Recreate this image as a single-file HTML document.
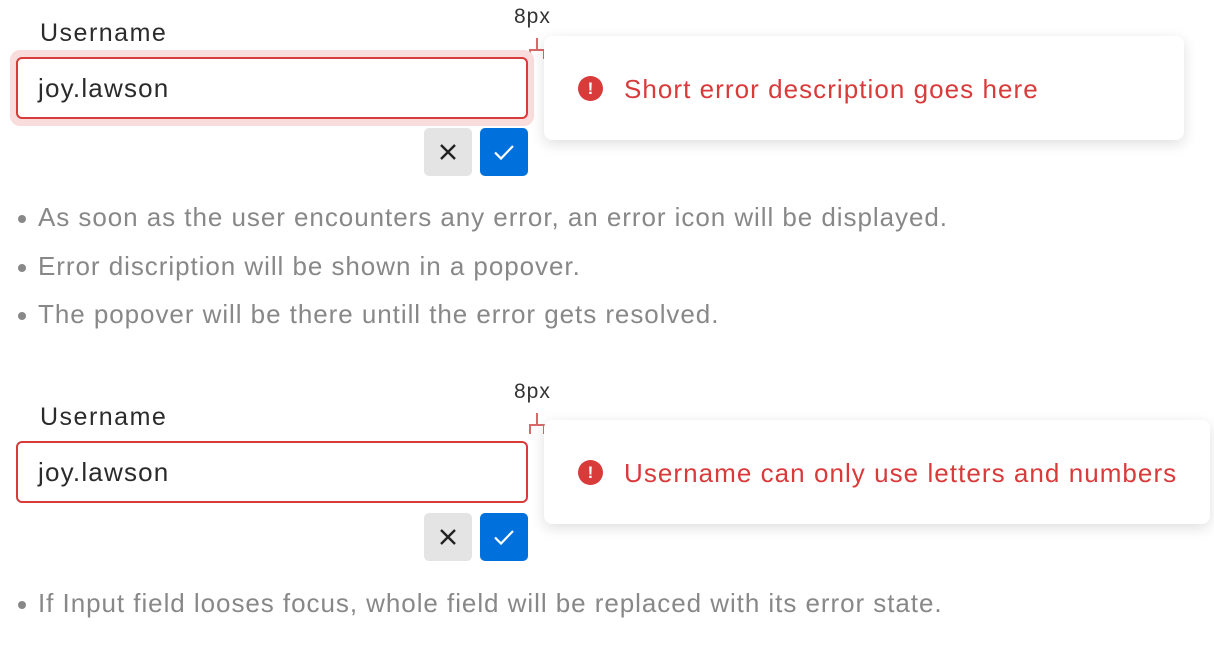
<!DOCTYPE html>
<html><head><meta charset="utf-8"><style>
*{margin:0;padding:0;box-sizing:border-box}
body{width:1214px;height:656px;background:#fff;font-family:"Liberation Sans",sans-serif;position:relative;overflow:hidden;color:#2b2b2b}
.abs{position:absolute;white-space:nowrap}
.label{font-size:25px;letter-spacing:1.5px;color:#2b2b2b}
.input{position:absolute;left:16px;width:512px;height:62px;border:2px solid #d93a3a;border-radius:6px;background:#fff;font-size:26px;letter-spacing:1.2px;padding-left:20px;line-height:58px;color:#2b2b2b}
.ring{position:absolute;left:10px;width:524px;height:76px;background:#f9dcdc;border-radius:10px}
.btn{position:absolute;width:48px;height:48px;border-radius:5px}
.x{background:#e4e4e4}.ok{background:#0070dd}
.pop{position:absolute;left:544px;height:104px;background:#fff;border-radius:8px;box-shadow:0 4px 14px rgba(0,0,0,.13);font-size:26px;letter-spacing:1.05px;color:#d93a3a;line-height:106px;padding-left:80px}
.ic{position:absolute;left:34px;top:40px;width:25px;height:25px;border-radius:50%;background:#d93a3a;color:#fff;font-size:17px;font-weight:bold;line-height:25px;text-align:center;letter-spacing:0}
.b{font-size:26px;letter-spacing:0.95px;color:#888;left:38px}
.dot{position:absolute;left:-20px;top:13px;width:8px;height:8px;border-radius:50%;background:#888}
.px{font-size:21px;letter-spacing:1px;color:#333}
.br{position:absolute;border:2px solid #d96a6a;border-bottom:none;width:16px;height:10px}
.bv{position:absolute;width:2px;background:#d96a6a;height:12px}
</style></head><body>
<div class="abs label" style="left:40px;top:19px">Username</div>
<div class="abs px" style="left:514px;top:5px">8px</div>
<div class="bv" style="left:536px;top:38px"></div>
<div class="br" style="left:529px;top:49px"></div>
<div class="ring" style="top:50px"></div>
<div class="input" style="top:57px">joy.lawson</div>
<div class="btn x" style="left:424px;top:128px"><svg width="48" height="48"><path d="M17 17L31 31M31 17L17 31" stroke="#222" stroke-width="2.4"/></svg></div>
<div class="btn ok" style="left:480px;top:128px"><svg width="48" height="48"><path d="M15 24.5L21 30.5L33 18" stroke="#fff" stroke-width="2.2" fill="none"/></svg></div>
<div class="pop" style="top:36px;width:640px"><div class="ic">!</div>Short error description goes here</div>
<div class="abs b" style="top:202px"><span class="dot"></span>As soon as the user encounters any error, an error icon will be displayed.</div>
<div class="abs b" style="top:251px"><span class="dot"></span>Error discription will be shown in a popover.</div>
<div class="abs b" style="top:299px"><span class="dot"></span>The popover will be there untill the error gets resolved.</div>

<div class="abs label" style="left:40px;top:403px">Username</div>
<div class="abs px" style="left:514px;top:380px">8px</div>
<div class="bv" style="left:536px;top:413px"></div>
<div class="br" style="left:529px;top:424px"></div>
<div class="input" style="top:441px">joy.lawson</div>
<div class="btn x" style="left:424px;top:513px"><svg width="48" height="48"><path d="M17 17L31 31M31 17L17 31" stroke="#222" stroke-width="2.4"/></svg></div>
<div class="btn ok" style="left:480px;top:513px"><svg width="48" height="48"><path d="M15 24.5L21 30.5L33 18" stroke="#fff" stroke-width="2.2" fill="none"/></svg></div>
<div class="pop" style="top:420px;width:666px"><div class="ic">!</div>Username can only use letters and numbers</div>
<div class="abs b" style="top:588px"><span class="dot"></span>If Input field looses focus, whole field will be replaced with its error state.</div>
</body></html>
